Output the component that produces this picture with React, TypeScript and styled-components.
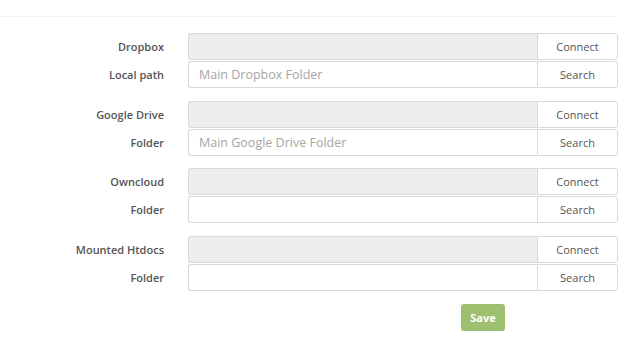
import styled, { createGlobalStyle } from "styled-components";

const GlobalStyle = createGlobalStyle`
  body {
    margin: 0;
    background: #fff;
    font-family: "Open Sans", "Liberation Sans", sans-serif;
  }
`;

const Page = styled.div`
  width: 640px;
  height: 364px;
  padding-top: 16px;
  box-sizing: border-box;
`;
const Divider = styled.div`
  width: 615px;
  border-top: 1px solid #f0f0f0;
  margin-bottom: 16px;
`;
const Form = styled.div`
  display: flex;
  flex-direction: column;
  gap: 12.5px;
`;
const Group = styled.div`
  display: flex;
  flex-direction: column;
  gap: 1px;
`;
const Row = styled.div`
  display: grid;
  grid-template-columns: 164px 349px 81px;
  column-gap: 24px;
  height: 27px;
  align-items: center;
`;
const Label = styled.label`
  text-align: right;
  font-size: 11px;
  font-weight: 600;
  color: #555;
`;
const InputGroup = styled.div`
  display: flex;
  grid-column: 2 / 4;
  height: 27px;
  margin-right: -24px;
`;
const Input = styled.input<{ $disabled?: boolean }>`
  box-sizing: border-box;
  width: 349px;
  height: 27px;
  border: 1px solid #d9d9d9;
  border-right: none;
  border-radius: 3px 0 0 3px;
  background: ${(p) => (p.$disabled ? "#eeeeee" : "#fff")};
  padding: 0 10px;
  font-family: inherit;
  font-size: 12.5px;
  color: #555;
  outline: none;
  &::placeholder {
    color: #a6a6a6;
  }
`;
const AddonButton = styled.button`
  box-sizing: border-box;
  width: 81px;
  height: 27px;
  border: 1px solid #d9d9d9;
  border-radius: 0 3px 3px 0;
  background: #fff;
  font-family: inherit;
  font-size: 11px;
  color: #555;
  padding: 0;
`;
const Footer = styled.div`
  display: flex;
  justify-content: flex-start;
  padding-left: 461px;
  margin-top: 13px;
`;
const SaveButton = styled.button`
  width: 44px;
  height: 27px;
  border: none;
  border-radius: 3px;
  background: #9dbf6f;
  color: #fff;
  font-family: inherit;
  font-size: 11px;
  font-weight: 700;
  padding: 0;
`;

interface IField {
    label: string;
    disabled?: boolean;
    placeholder?: string;
    action: string;
}

const groups: IField[][] = [
    [
        { label: "Dropbox", disabled: true, action: "Connect" },
        { label: "Local path", placeholder: "Main Dropbox Folder", action: "Search" },
    ],
    [
        { label: "Google Drive", disabled: true, action: "Connect" },
        { label: "Folder", placeholder: "Main Google Drive Folder", action: "Search" },
    ],
    [
        { label: "Owncloud", disabled: true, action: "Connect" },
        { label: "Folder", action: "Search" },
    ],
    [
        { label: "Mounted Htdocs", disabled: true, action: "Connect" },
        { label: "Folder", action: "Search" },
    ],
];

const App = () => {
    return (
        <Page>
            <GlobalStyle />
            <Divider />
            <Form>
                {groups.map((g, i) => (
                    <Group key={i}>
                        {g.map((f, j) => (
                            <Row key={j}>
                                <Label>{f.label}</Label>
                                <InputGroup>
                                    <Input
                                        $disabled={f.disabled}
                                        readOnly={f.disabled}
                                        placeholder={f.placeholder}
                                    />
                                    <AddonButton>{f.action}</AddonButton>
                                </InputGroup>
                            </Row>
                        ))}
                    </Group>
                ))}
            </Form>
            <Footer>
                <SaveButton>Save</SaveButton>
            </Footer>
        </Page>
    );
};

export default App;
